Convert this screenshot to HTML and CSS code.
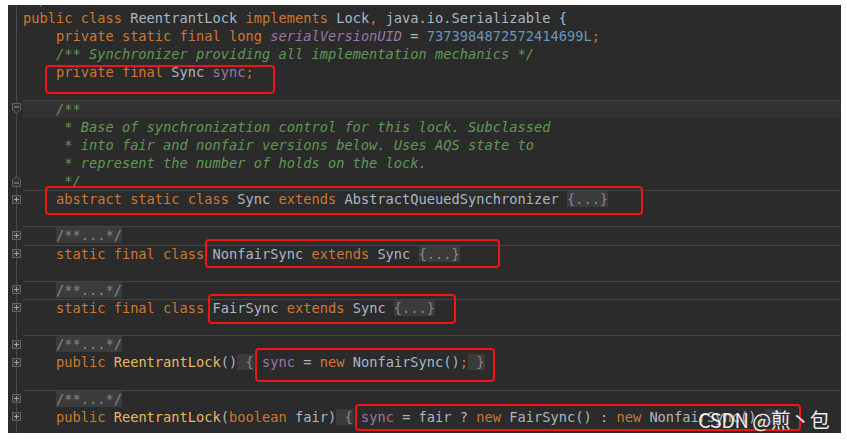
FILE: index.html
```html
<!DOCTYPE html>
<html>
<head>
<meta charset="utf-8">
<link rel="stylesheet" href="styles.css">
</head>
<body>
<div class="page">
  <div class="editor">
    <div class="rows">
      <div class="row"><div class="g"></div><div class="c"><span class="d"> */</span></div></div>
      <div class="row"><div class="g"></div><div class="c"><span class="k">public class </span>ReentrantLock <span class="k">implements </span>Lock<span class="k">, </span>java.io.Serializable {</div></div>
      <div class="row"><div class="g"></div><div class="c">    <span class="k">private static final long </span><span class="sf">serialVersionUID</span> = <span class="n">7373984872572414699L</span><span class="k">;</span></div></div>
      <div class="row"><div class="g"></div><div class="c">    <span class="d">/** Synchronizer providing all implementation mechanics */</span></div></div>
      <div class="row"><div class="g"></div><div class="c">    <span class="k">private final </span>Sync <span class="f">sync</span><span class="k">;</span></div></div>
      <div class="row"><div class="g"></div><div class="c"></div></div>
      <div class="row sep caret"><div class="g"><svg width="9" height="11" viewBox="0 0 9 11"><path d="M0.5 0.5h8v6.5l-4 3.5l-4-3.5z" fill="#333" stroke="#626262"/><path d="M2 4h5" stroke="#9a9a9a"/></svg></div><div class="c">    <span class="d">/**</span></div></div>
      <div class="row"><div class="g"></div><div class="c">     <span class="d">* Base of synchronization control for this lock. Subclassed</span></div></div>
      <div class="row"><div class="g"></div><div class="c">     <span class="d">* into fair and nonfair versions below. Uses AQS state to</span></div></div>
      <div class="row"><div class="g"></div><div class="c">     <span class="d">* represent the number of holds on the lock.</span></div></div>
      <div class="row"><div class="g"><svg width="9" height="11" viewBox="0 0 9 11"><path d="M0.5 10.5h8v-6.5l-4-3.5l-4 3.5z" fill="#333" stroke="#626262"/><path d="M2 7h5" stroke="#9a9a9a"/></svg></div><div class="c">     <span class="d">*/</span></div></div>
      <div class="row sep"><div class="g"><svg width="9" height="9" viewBox="0 0 9 9"><rect x="0.5" y="0.5" width="8" height="8" fill="#3a3a3a" stroke="#626262"/><path d="M2 4.5h5M4.5 2v5" stroke="#a0a0a0"/></svg></div><div class="c">    <span class="k">abstract static class </span>Sync <span class="k">extends </span>AbstractQueuedSynchronizer <span class="fold">{...}</span></div></div>
      <div class="row"><div class="g"></div><div class="c"></div></div>
      <div class="row sep"><div class="g"><svg width="9" height="9" viewBox="0 0 9 9"><rect x="0.5" y="0.5" width="8" height="8" fill="#3a3a3a" stroke="#626262"/><path d="M2 4.5h5M4.5 2v5" stroke="#a0a0a0"/></svg></div><div class="c">    <span class="fold">/**...*/</span></div></div>
      <div class="row sep"><div class="g"><svg width="9" height="9" viewBox="0 0 9 9"><rect x="0.5" y="0.5" width="8" height="8" fill="#3a3a3a" stroke="#626262"/><path d="M2 4.5h5M4.5 2v5" stroke="#a0a0a0"/></svg></div><div class="c">    <span class="k">static final class </span>NonfairSync <span class="k">extends </span>Sync <span class="fold">{...}</span></div></div>
      <div class="row"><div class="g"></div><div class="c"></div></div>
      <div class="row sep"><div class="g"><svg width="9" height="9" viewBox="0 0 9 9"><rect x="0.5" y="0.5" width="8" height="8" fill="#3a3a3a" stroke="#626262"/><path d="M2 4.5h5M4.5 2v5" stroke="#a0a0a0"/></svg></div><div class="c">    <span class="fold">/**...*/</span></div></div>
      <div class="row sep"><div class="g"><svg width="9" height="9" viewBox="0 0 9 9"><rect x="0.5" y="0.5" width="8" height="8" fill="#3a3a3a" stroke="#626262"/><path d="M2 4.5h5M4.5 2v5" stroke="#a0a0a0"/></svg></div><div class="c">    <span class="k">static final class </span>FairSync <span class="k">extends </span>Sync <span class="fold">{...}</span></div></div>
      <div class="row"><div class="g"></div><div class="c"></div></div>
      <div class="row sep"><div class="g"><svg width="9" height="9" viewBox="0 0 9 9"><rect x="0.5" y="0.5" width="8" height="8" fill="#3a3a3a" stroke="#626262"/><path d="M2 4.5h5M4.5 2v5" stroke="#a0a0a0"/></svg></div><div class="c">    <span class="fold">/**...*/</span></div></div>
      <div class="row"><div class="g"><svg width="9" height="9" viewBox="0 0 9 9"><rect x="0.5" y="0.5" width="8" height="8" fill="#3a3a3a" stroke="#626262"/><path d="M2 4.5h5M4.5 2v5" stroke="#a0a0a0"/></svg></div><div class="c">    <span class="k">public </span><span class="m">ReentrantLock</span>()<span class="fold"> {</span> <span class="f">sync</span> = <span class="k">new </span>NonfairSync()<span class="k">;</span><span class="fold"> }</span></div></div>
      <div class="row"><div class="g"></div><div class="c"></div></div>
      <div class="row sep"><div class="g"><svg width="9" height="9" viewBox="0 0 9 9"><rect x="0.5" y="0.5" width="8" height="8" fill="#3a3a3a" stroke="#626262"/><path d="M2 4.5h5M4.5 2v5" stroke="#a0a0a0"/></svg></div><div class="c">    <span class="fold">/**...*/</span></div></div>
      <div class="row"><div class="g"><svg width="9" height="9" viewBox="0 0 9 9"><rect x="0.5" y="0.5" width="8" height="8" fill="#3a3a3a" stroke="#626262"/><path d="M2 4.5h5M4.5 2v5" stroke="#a0a0a0"/></svg></div><div class="c">    <span class="k">public </span><span class="m">ReentrantLock</span>(<span class="k">boolean </span>fair)<span class="fold"> {</span> <span class="f">sync</span> = fair ? <span class="k">new </span>FairSync() : <span class="k">new </span>NonfairSync()<span class="k">;</span><span class="fold"> }</span></div></div>
      <div class="row"><div class="g"></div><div class="c"></div></div>
    </div>
    <div class="mark m1"></div>
    <div class="mark m2"></div>
    <div class="mark m3"></div>
    <div class="mark m4"></div>
    <div class="mark m5"></div>
    <div class="mark m6"></div>
    <div class="wm">CSDN @煎丶包</div>
  </div>
</div>
</body>
</html>
```

FILE: styles.css
```css
html, body {
  margin: 0;
  background: #ffffff;
}

.page {
  padding: 5px 6px 7px 8px;
}

.editor {
  position: relative;
  width: 833px;
  height: 428px;
  overflow: hidden;
  background:
    linear-gradient(to right, transparent 8px, #4b4b4b 8px, #4b4b4b 9px, transparent 9px),
    #2b2b2b;
  font-family: "DejaVu Sans Mono", monospace;
  font-size: 13.7px;
}

.rows {
  margin-top: -14.21px;
}

.row {
  display: flex;
  height: 18.14px;
  line-height: 18.14px;
}

.g {
  width: 15px;
  flex: none;
  display: flex;
  align-items: center;
  padding-left: 4px;
  box-sizing: border-box;
}

.g svg {
  display: block;
}

.c {
  flex: 1;
  white-space: pre;
  color: #a9b7c6;
}

.sep .c {
  box-shadow: inset 0 1px 0 #464646;
}

.caret .c {
  background: #323232;
}

.k { color: #cc7832; }
.f { color: #9876aa; }
.sf { color: #9876aa; font-style: italic; }
.n { color: #6897bb; }
.d { color: #629755; font-style: italic; }
.m { color: #e8b864; }

.fold {
  background: #3b3b3b;
  color: #878787;
}

.mark {
  position: absolute;
  border: 2.5px solid #f01414;
  border-radius: 4px;
  box-sizing: border-box;
}

.m1 { left: 37px; top: 60px; width: 230px; height: 29px; }
.m2 { left: 37px; top: 181px; width: 598px; height: 29px; }
.m3 { left: 197px; top: 234px; width: 295px; height: 29px; }
.m4 { left: 200px; top: 289px; width: 248px; height: 30px; }
.m5 { left: 247px; top: 343px; width: 240px; height: 34px; }
.m6 { left: 347px; top: 399px; width: 446px; height: 27px; }

.wm {
  position: absolute;
  left: 690px;
  top: 401px;
  font-family: "Noto Sans CJK SC", sans-serif;
  font-size: 20px;
  line-height: 28px;
  letter-spacing: -0.5px;
  color: rgba(255, 255, 255, 0.92);
  white-space: nowrap;
}
```
